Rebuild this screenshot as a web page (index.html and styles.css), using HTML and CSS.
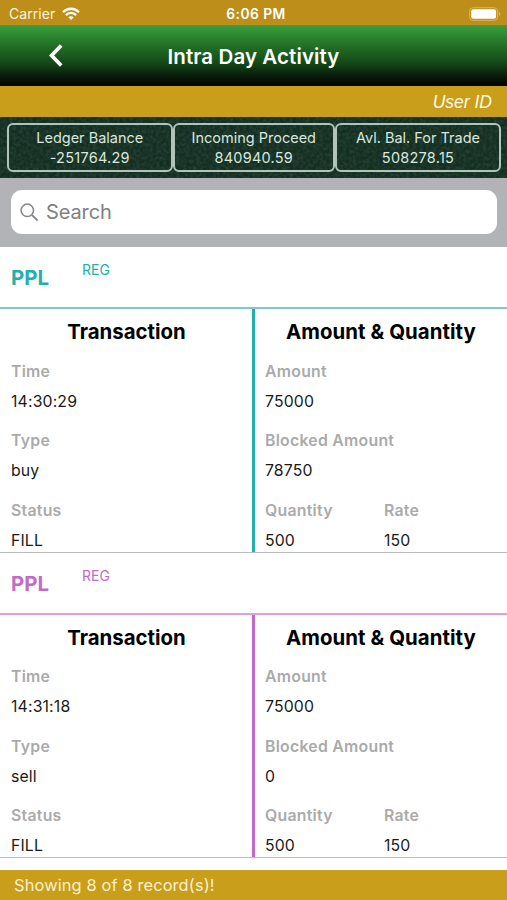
FILE: index.html
```html
<!DOCTYPE html>
<html lang="en">
<head>
<meta charset="utf-8">
<title>Intra Day Activity</title>
<link rel="stylesheet" href="styles.css">
</head>
<body>
<div class="app">
  <div class="status">
    <div class="carrier"><span>Carrier</span>
      <svg width="18" height="14" viewBox="0 0 18 14" fill="none" stroke="#fff" stroke-width="2.3"><path d="M1 5.2C5.5.6 12.500.6 17 5.200M3.900 8.100C6.800 5.200 11.200 5.200 14.100 8.100"/><path d="M9 13L6.300 10.300Q9 8.200 11.700 10.300Z" fill="#fff" stroke="none"/></svg>
    </div>
    <span class="clock">6:06 PM</span>
    <svg class="battery" width="32" height="14" viewBox="0 0 32 14"><rect x=".7" y=".7" width="28" height="12.600" rx="3.500" fill="none" stroke="#d6b765" stroke-width="1"/><rect x="2.300" y="2.300" width="24.800" height="9.400" rx="2" fill="#fff"/><path d="M30 5v4q1.300-.5 1.300-2T30 5Z" fill="#d6b765"/></svg>
  </div>
  <header class="nav">
    <svg class="back" width="14" height="23" viewBox="0 0 14 23" fill="none" stroke="#fff" stroke-width="3.700"><path d="M12.200 1.500L2.600 11.500L12.200 21.500"/></svg>
    <h1>Intra Day Activity</h1>
  </header>
  <div class="user"><span>User ID</span></div>
  <section class="balances">
    <svg class="texture" width="507" height="61"><filter id="grain"><feTurbulence type="fractalNoise" baseFrequency=".3" numOctaves="3" seed="4"/><feColorMatrix values="0 0 0 0 .3  0 0 0 0 .45  0 0 0 0 .37  .6 0 0 0 -.2"/></filter><rect width="507" height="61" filter="url(#grain)"/></svg>
    <div class="balance"><span>Ledger Balance</span><span class="value">-251764.29</span></div>
    <div class="balance"><span>Incoming Proceed</span><span class="value">840940.59</span></div>
    <div class="balance"><span>Avl. Bal. For Trade</span><span class="value">508278.15</span></div>
  </section>
  <div class="searchbar">
    <div class="search">
      <svg width="19" height="19" viewBox="0 0 19 19" fill="none" stroke="#85858a" stroke-width="1.500"><circle cx="7.300" cy="7.300" r="6.200"/><path d="M11.800 11.800L17.600 17.600" stroke-width="1.900"/></svg>
      <span>Search</span>
    </div>
  </div>
  <main>
    <article class="card teal">
      <div class="card-head"><strong>PPL</strong><span>REG</span></div>
      <div class="card-body">
        <div class="col left">
          <h2>Transaction</h2>
          <dl><dt>Time</dt><dd>14:30:29</dd></dl>
          <dl><dt>Type</dt><dd>buy</dd></dl>
          <dl><dt>Status</dt><dd>FILL</dd></dl>
        </div>
        <div class="col right">
          <h2>Amount &amp; Quantity</h2>
          <dl><dt>Amount</dt><dd>75000</dd></dl>
          <dl><dt>Blocked Amount</dt><dd>78750</dd></dl>
          <div class="pair"><dl><dt>Quantity</dt><dd>500</dd></dl><dl><dt>Rate</dt><dd>150</dd></dl></div>
        </div>
      </div>
    </article>
    <article class="card purple">
      <div class="card-head"><strong>PPL</strong><span>REG</span></div>
      <div class="card-body">
        <div class="col left">
          <h2>Transaction</h2>
          <dl><dt>Time</dt><dd>14:31:18</dd></dl>
          <dl><dt>Type</dt><dd>sell</dd></dl>
          <dl><dt>Status</dt><dd>FILL</dd></dl>
        </div>
        <div class="col right">
          <h2>Amount &amp; Quantity</h2>
          <dl><dt>Amount</dt><dd>75000</dd></dl>
          <dl><dt>Blocked Amount</dt><dd>0</dd></dl>
          <div class="pair"><dl><dt>Quantity</dt><dd>500</dd></dl><dl><dt>Rate</dt><dd>150</dd></dl></div>
        </div>
      </div>
    </article>
  </main>
  <footer><span>Showing 8 of 8 record(s)!</span></footer>
</div>
</body>
</html>
```
FILE: styles.css
```css
* { box-sizing: border-box; }
body { margin: 0; font-family: Inter, "Liberation Sans", sans-serif; }
h1, h2, dl, dt, dd { margin: 0; }
svg { display: block; flex: none; }
.app { width: 507px; height: 900px; display: flex; flex-direction: column; overflow: hidden; background: #fff; }
.status { height: 25px; flex: none; display: grid; grid-template-columns: 1fr auto 1fr; align-items: center; padding: 2px 6px 0 9px; background: #bd8e19; color: #fff; }
.carrier { display: flex; gap: 7px; align-items: center; font-size: 14px; letter-spacing: .05px; color: #fcf3dc; }
.clock { padding-left: 2px; font-size: 13.8px; font-weight: 600; letter-spacing: .45px; }
.battery { justify-self: end; }
.nav { height: 61px; flex: none; display: grid; grid-template-columns: 63px 1fr 63px; align-items: center; background: linear-gradient(#3a9f3d 0%, #26782a 28%, #154c18 60%, #061408 88%, #000 100%); color: #fff; }
.back { justify-self: end; }
.nav h1 { text-align: center; font-size: 20.5px; font-weight: 600; line-height: 26px; padding-top: 2px; letter-spacing: .1px; }
.user { height: 31px; flex: none; display: flex; align-items: center; justify-content: flex-end; padding: 2px 15px 0 0; background: #c89e1b; color: #fff8e4; font: italic 17.5px "Liberation Sans", sans-serif; }
.balances { height: 61px; flex: none; position: relative; display: grid; grid-template-columns: 165.5px 162.5px 166px; padding: 6px 6px 6px 7px; background: #142e22; }
.texture { position: absolute; inset: 0; opacity: .5; }
.balance { position: relative; border: 2px solid #b0c5b8; border-radius: 6px; display: flex; flex-direction: column; align-items: center; padding-top: 2.5px; color: #d8e8de; font-size: 14.5px; line-height: 20.5px; }
.value { letter-spacing: .25px; }
.searchbar { height: 69px; flex: none; padding: 12px 10px 13px 11px; background: #b2b3b7; }
.search { height: 44px; display: flex; align-items: center; gap: 7px; padding-left: 9px; border-radius: 11px; background: #fff; color: #808085; font-size: 20px; letter-spacing: -.1px; }
main { flex: 1; }
.card { --accent: #21b0ad; --rule: #7dcbc8; height: 305.5px; display: flex; flex-direction: column; border-bottom: 1px solid #bbb; }
.purple { --accent: #c36ac9; --rule: #d9a2dc; }
.card-head { height: 62px; flex: none; display: flex; align-items: flex-start; padding: 0 11px; border-bottom: 2px solid var(--rule); color: var(--accent); }
.card-head strong { width: 71px; font-size: 20.4px; line-height: 62px; }
.card-head span { font-size: 14px; line-height: 46px; }
.card-body { flex: 1; min-height: 0; display: grid; grid-template-columns: 255px 1fr; overflow: hidden; }
.left { border-right: 3px solid var(--accent); padding-left: 11px; }
.right { padding-left: 10px; }
.col { height: 243px; overflow: hidden; }
h2 { margin-left: -10px; height: 47.6px; text-align: center; font-size: 20.4px; line-height: 45px; letter-spacing: .06px; }
.left h2 { letter-spacing: 0; }
dl { height: 69.6px; font-size: 15.8px; }
dt { line-height: 30px; font-weight: 600; letter-spacing: .27px; color: #aaa; }
dd { line-height: 29px; letter-spacing: .15px; color: #1a1a1a; }
.pair { display: grid; grid-template-columns: 119px 1fr; }
footer { height: 30.5px; flex: none; display: flex; align-items: center; padding-left: 14px; background: #c89e1b; color: #fbf0ce; font-size: 16.4px; letter-spacing: .13px; }
```
